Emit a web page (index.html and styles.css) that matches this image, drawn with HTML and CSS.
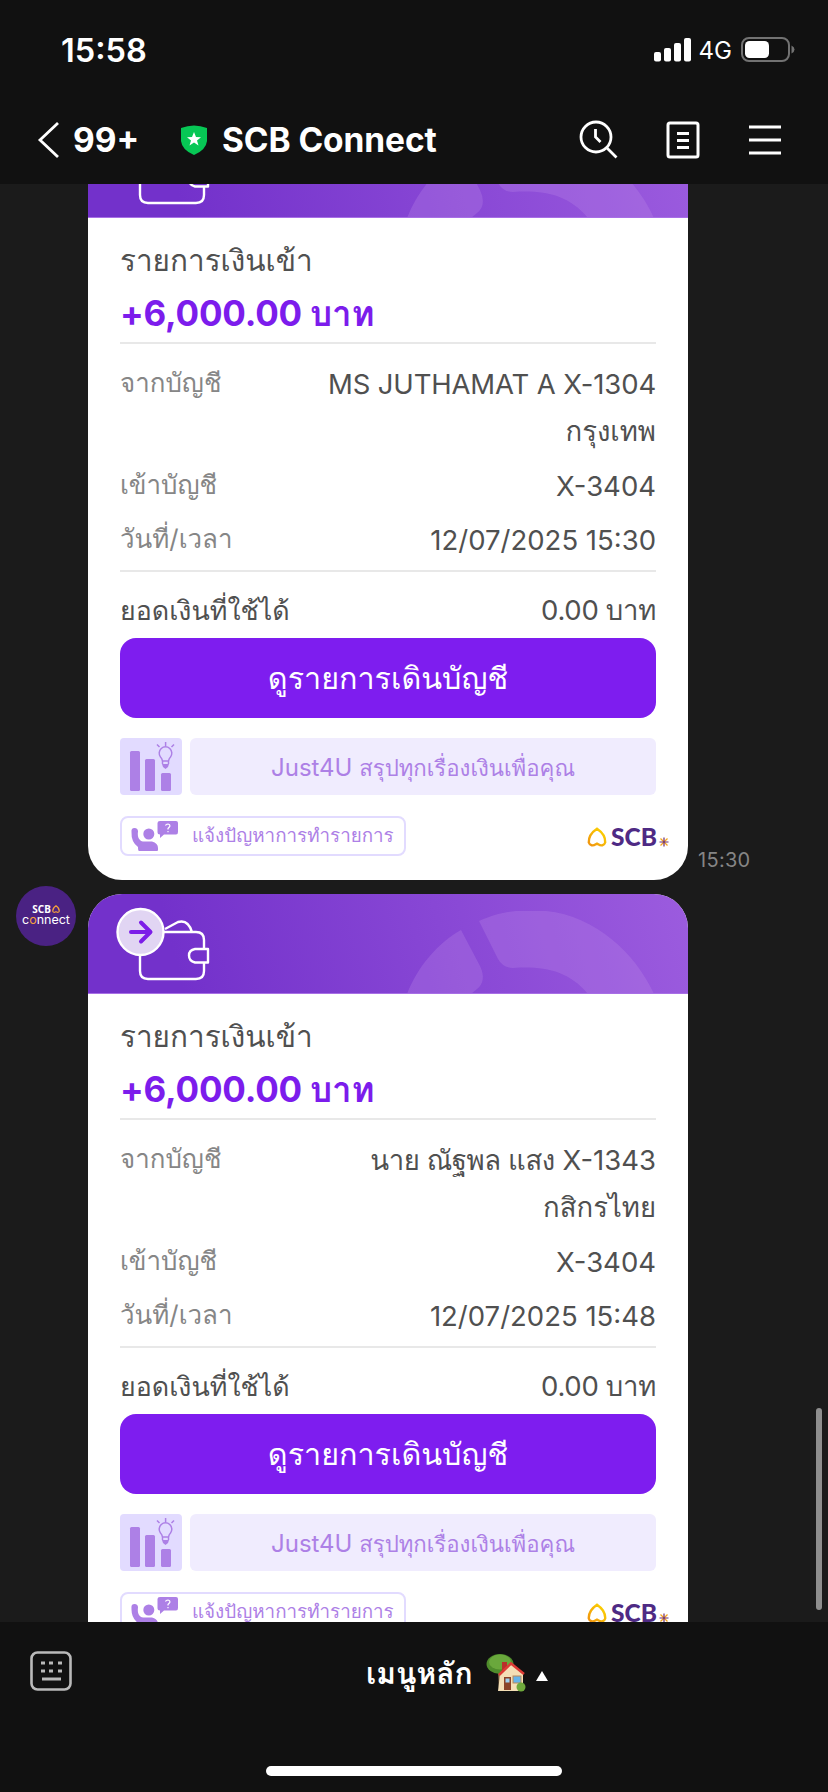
FILE: index.html
```html
<!DOCTYPE html>
<html lang="th">
<head>
<meta charset="utf-8">
<title>SCB Connect</title>
<link rel="stylesheet" href="styles.css">
</head>
<body>
<svg class="defs" width="0" height="0" aria-hidden="true">
  <defs>
    <linearGradient id="banner" x1="0" y1="100" x2="600" y2="-60" gradientUnits="userSpaceOnUse">
      <stop offset="0.15" stop-color="#7331cb"/>
      <stop offset="1" stop-color="#9d5ddf"/>
    </linearGradient>
    <linearGradient id="gold" x1="0" y1="1" x2="1" y2="0">
      <stop offset="0" stop-color="#f0930f"/>
      <stop offset="1" stop-color="#fdd900"/>
    </linearGradient>
    <symbol id="hero" viewBox="0 0 600 100">
      <rect width="600" height="100" fill="url(#banner)"/>
      <g fill="#c08bea" fill-opacity=".28">
        <path d="M319 100C330 72 350 49 373 36L392 72Q399 87 389 95L383 100Z"/>
        <path d="M391 27C406 20 417 18 428 17H458C508 22 548 60 566 100H500C480 76 455 72 425 74Q415 74 410 65Z"/>
      </g>
      <path d="M0 99.500H600" stroke="#a86fe6"/>
      <g fill="none" stroke="#fff" stroke-width="2.400" stroke-linejoin="round">
        <path d="M52 38V77Q52 85 60 85H108Q116 85 116 77V69M116 54V46Q116 38 108 38H75M77 35L90 28Q100 25 104 38"/>
        <path d="M120 55H107Q101 56 101 61.500Q101 67 107 68.500H120Z"/>
        <circle cx="52.500" cy="38" r="23" fill="#e1d5f3"/>
      </g>
      <path d="M43 38H62M53 28.500L62.500 38L53 47.500" fill="none" stroke="#7c1de8" stroke-width="4" stroke-linecap="round" stroke-linejoin="round"/>
    </symbol>
    <symbol id="chart" viewBox="0 0 62 57">
      <g fill="#ad80e6">
        <rect x="10" y="13" width="10" height="40" rx="1.500"/>
        <rect x="25" y="21" width="10" height="32" rx="1.500"/>
        <rect x="41" y="35" width="10" height="18" rx="1.500"/>
        <path d="M42 26H49L48 29L45.500 31L43 29Z"/>
      </g>
      <path d="M42.500 26V23Q42 20.500 40.500 19A6.300 6.300 0 1 1 50.500 19Q49 20.500 48.500 23V26M42.500 23H48.500M45.600 4V8M37 6.500L39.500 9M54 6.500L51.500 9" fill="none" stroke="#ad80e6" stroke-width="1.500"/>
    </symbol>
    <symbol id="help" viewBox="0 0 48 32">
      <g fill="#ad80e6">
        <circle cx="17.800" cy="14" r="5.500"/>
        <path d="M3.500 8Q7 8 7 11.500C6 18 9 21 12 21.500H21Q27 23 27 28V30Q27 31 26 31H8Q7 31 7 27Q0 22 .5 12Q0 8 3.500 8Z"/>
        <path d="M29 1H45Q47 1 47 3V12Q47 14.500 45 14.500H33L29 18V14.500Q26.500 14.500 26.500 12V3Q26.500 1 29 1Z"/>
      </g>
      <path d="M34.500 5.500Q35 4 37 4Q39.300 4.500 38.800 6.500L37 8.500V9.500M37 11V12.200" fill="none" stroke="#fff" stroke-width="1.200"/>
    </symbol>
    <symbol id="leaf" viewBox="0 0 20 20">
      <path d="M8.800 18.300V17.300C6 19 2.800 18.700 1.800 15.500C1.500 9.500 4.500 5.500 10 1.800C15.500 5.500 18.500 9.500 18.200 15.500C17.200 18.700 14 19 11.200 17.300V18.300" fill="none" stroke="url(#gold)" stroke-width="2.400"/>
    </symbol>
    <symbol id="spark" viewBox="0 0 10 10">
      <path d="M1.500 1.500L8.500 8.500M8.500 1.500L1.500 8.500" stroke="#f5a21b" stroke-width="1.300"/>
      <path d="M5 .5V9.500M.5 5H9.500" stroke="#6a2c70" stroke-width="1.200"/>
    </symbol>
  </defs>
</svg>

<div class="screen">
  <header class="top">
    <div class="status">
      <span class="clock">15:58</span>
      <span class="network">
        <svg class="signal" viewBox="0 0 38 24"><g fill="#fff"><rect x="0" y="14" width="7" height="9.500" rx="2"/><rect x="10" y="10" width="7" height="13.500" rx="2"/><rect x="20" y="5" width="7" height="18.500" rx="2"/><rect x="30" y="0" width="7" height="23.500" rx="2"/></g></svg>
        <span class="net-type">4G</span>
        <svg class="battery" viewBox="0 0 54 26"><rect x="1" y="1" width="47" height="23" rx="7" fill="none" stroke="#727272" stroke-width="2"/><rect x="4" y="4" width="24" height="17" rx="4.500" fill="#fff"/><path d="M50.500 8.500Q53.500 10 53.500 12.500Q53.500 15 50.500 16.500Z" fill="#727272"/></svg>
      </span>
    </div>
    <nav class="nav">
      <svg class="back" viewBox="0 0 24 38"><path d="M21 2L3 19L21 36" fill="none" stroke="#fff" stroke-width="2.800"/></svg>
      <span class="unread">99+</span>
      <svg class="shield" viewBox="0 0 28 31"><path d="M1 3Q14-2 27 3V16Q26 25 14 30Q2 25 1 16Z" fill="#07c755"/><path d="M14 7L16 12L21 12.200L17 15.500L18.500 20.500L14 17.500L9.500 20.500L11 15.500L7 12.200L12 12Z" fill="#fff"/></svg>
      <span class="title">SCB Connect</span>
      <span class="actions">
        <svg class="search" viewBox="0 0 40 40"><g fill="none" stroke="#fff" stroke-width="2.800"><circle cx="17" cy="17" r="15"/><path d="M27 27L37.500 37.500M16.500 9V17L21.500 22"/></g></svg>
        <svg class="note" viewBox="0 0 34 38"><rect x="2" y="2" width="30" height="34" rx="2" fill="none" stroke="#fff" stroke-width="3"/><path d="M11 12.500H23M11 19.500H23M11 26.500H23" stroke="#fff" stroke-width="2.800"/></svg>
        <svg class="menu" viewBox="0 0 34 32"><path d="M1 3H33M1 16H33M1 29H33" stroke="#fff" stroke-width="2.800"/></svg>
      </span>
    </nav>
  </header>

  <main class="chat">
    <section class="message first">
      <article class="card">
        <svg class="banner"><use href="#hero"/></svg>
        <div class="body">
          <h2 class="kind">รายการเงินเข้า</h2>
          <p class="amount">+6,000.00 บาท</p>
          <div class="row from"><span class="label">จากบัญชี</span><span class="value"><span class="sender">MS JUTHAMAT A X-1304</span><br>กรุงเทพ</span></div>
          <div class="row to"><span class="label">เข้าบัญชี</span><span class="value">X-3404</span></div>
          <div class="row date"><span class="label">วันที่/เวลา</span><span class="value">12/07/2025 15:30</span></div>
          <div class="row balance"><span class="label">ยอดเงินที่ใช้ได้</span><span class="value">0.00 บาท</span></div>
          <div class="statement">ดูรายการเดินบัญชี</div>
          <div class="promo"><svg class="chart"><use href="#chart"/></svg><span class="promo-text">Just4U <span class="promo-thai">สรุปทุกเรื่องเงินเพื่อคุณ</span></span></div>
          <div class="foot">
            <span class="report"><svg class="help"><use href="#help"/></svg><span class="report-text">แจ้งปัญหาการทำรายการ</span></span>
            <span class="brand"><svg class="leaf"><use href="#leaf"/></svg><b>SCB</b><svg class="spark"><use href="#spark"/></svg></span>
          </div>
        </div>
      </article>
      <time class="time">15:30</time>
    </section>

    <section class="message">
      <div class="avatar"><span class="avatar-top">SCB<svg class="avatar-leaf" viewBox="0 0 20 20"><path d="M8.800 18.300V17.300C6 19 2.800 18.700 1.800 15.500C1.500 9.500 4.500 5.500 10 1.800C15.500 5.500 18.500 9.500 18.200 15.500C17.200 18.700 14 19 11.200 17.300V18.300" fill="none" stroke="#f5a13c" stroke-width="2.800"/></svg></span><span class="avatar-name">c<i>o</i>nnect</span></div>
      <article class="card">
        <svg class="banner"><use href="#hero"/></svg>
        <div class="body">
          <h2 class="kind">รายการเงินเข้า</h2>
          <p class="amount">+6,000.00 บาท</p>
          <div class="row from"><span class="label">จากบัญชี</span><span class="value"><span class="sender-thai">นาย ณัฐพล แสง</span> X-1343<br>กสิกรไทย</span></div>
          <div class="row to"><span class="label">เข้าบัญชี</span><span class="value">X-3404</span></div>
          <div class="row date"><span class="label">วันที่/เวลา</span><span class="value">12/07/2025 15:48</span></div>
          <div class="row balance"><span class="label">ยอดเงินที่ใช้ได้</span><span class="value">0.00 บาท</span></div>
          <div class="statement">ดูรายการเดินบัญชี</div>
          <div class="promo"><svg class="chart"><use href="#chart"/></svg><span class="promo-text">Just4U <span class="promo-thai">สรุปทุกเรื่องเงินเพื่อคุณ</span></span></div>
          <div class="foot">
            <span class="report"><svg class="help"><use href="#help"/></svg><span class="report-text">แจ้งปัญหาการทำรายการ</span></span>
            <span class="brand"><svg class="leaf"><use href="#leaf"/></svg><b>SCB</b><svg class="spark"><use href="#spark"/></svg></span>
          </div>
        </div>
      </article>
    </section>
    <div class="scrollbar"></div>
  </main>

  <footer class="bottom">
    <svg class="keyboard" viewBox="0 0 42 40"><rect x="1.500" y="1.500" width="39" height="37" rx="6" fill="none" stroke="#bababa" stroke-width="2.600"/><path d="M11 12H15M19 12H23M28 12H32M11 20H15M19 20H23M28 20H32M12 28H31" stroke="#bababa" stroke-width="3"/></svg>
    <div class="main-menu">
      <span class="menu-label">เมนูหลัก</span>
      <svg class="house" viewBox="0 0 40 38">
        <path d="M12 17H17V36H13Z" fill="#8a6a46"/>
        <ellipse cx="14" cy="10" rx="13.500" ry="10" fill="#4f8c2c"/><ellipse cx="14" cy="8" rx="11" ry="7.500" fill="#6aa83c"/>
        <path d="M16 8H21V18H16Z" fill="#b9302b"/>
        <path d="M14 20L25 10L37 20V37H12Z" fill="#f4dfb6"/>
        <path d="M13 21L25 9.500L38 20" fill="none" stroke="#dc3b35" stroke-width="2.500"/>
        <rect x="18" y="23" width="7" height="13" fill="#8a4327"/><rect x="19.500" y="24.500" width="4" height="4" fill="#9ed0ee"/>
        <rect x="27" y="22" width="8" height="7" fill="#65b4ea" stroke="#b98a58"/>
        <ellipse cx="35" cy="33" rx="4.500" ry="4.500" fill="#6fa93c"/>
      </svg>
      <svg class="caret" viewBox="0 0 12 10"><path d="M6 0L12 10H0Z" fill="#fff"/></svg>
    </div>
    <div class="home"></div>
  </footer>
</div>
</body>
</html>
```

FILE: styles.css
```css
* { box-sizing: border-box; }
body { margin: 0; background: #111; font-family: Inter, Loma, "Noto Sans Thai Looped", "Noto Sans", sans-serif; }
svg { display: block; flex: none; }
.defs { position: absolute; }
.screen { width: 828px; height: 1792px; display: flex; flex-direction: column; overflow: hidden; color: #fff; }
.top { height: 184px; background: #111; flex: none; }
.status { height: 100px; padding: 0 33px 0 61px; display: flex; align-items: center; justify-content: space-between; }
.clock { font-size: 32.500px; font-weight: 600; }
.network { display: flex; align-items: center; }
.signal { width: 38px; height: 24px; }
.net-type { font-size: 24px; margin: 0 9px 0 7px; }
.battery { width: 54px; height: 26px; }
.nav { height: 84px; padding: 0 46px 4px 37px; display: flex; align-items: center; }
.back { width: 24px; height: 38px; }
.unread { width: 107px; padding-left: 12px; font-size: 33.500px; font-weight: 700; }
.shield { width: 28px; height: 31px; margin-left: 12px; }
.title { font-size: 33.500px; font-weight: 700; margin-left: 14px; letter-spacing: -.1px; }
.actions { margin-left: auto; display: flex; align-items: center; gap: 48px; }
.search { width: 40px; height: 40px; margin-right: -1px; }
.note { width: 34px; height: 38px; }
.menu { width: 34px; height: 32px; }

.chat { height: 1438px; background: #1b1b1b; position: relative; overflow: hidden; flex: none; display: flex; flex-direction: column; gap: 14px; }
.message { display: flex; align-items: flex-start; padding-left: 88px; position: relative; flex: none; }
.first { margin-top: -66px; }
.card { width: 600px; height: 762px; border-radius: 34px; overflow: hidden; background: #fff; color: #505050; }
.banner { width: 600px; height: 100px; }
.body { padding: 20px 32px 0; }
.kind { margin: 0; height: 46px; line-height: 45px; font-size: 29.700px; font-weight: 400; }
.amount { margin: 0; height: 60px; line-height: 59px; font-size: 35px; font-weight: 700; letter-spacing: -.2px; color: #7c1cec; border-bottom: 2px solid #e8e8e8; }
.row { display: flex; justify-content: space-between; line-height: 47px; font-size: 27.500px; white-space: nowrap; }
.row .label { color: #868686; font-size: 25.900px; line-height: 43px; }
.row .value { text-align: right; }
.sender { letter-spacing: -.15px; }
.sender-thai { letter-spacing: -.4px; }
.from { height: 110px; padding-top: 17px; }
.to { height: 54px; padding-top: 9px; }
.date { height: 64px; padding-top: 9px; border-bottom: 2px solid #e8e8e8; }
.row.balance { height: 66px; padding-top: 15px; }
.row.balance .label { color: #505050; font-size: 26.800px; line-height: 47px; }
.balance .value { letter-spacing: -.3px; }
.statement { height: 80px; line-height: 80px; border-radius: 16px; background: #7e1def; color: #fff; text-align: center; font-size: 30.500px; }
.promo { display: flex; gap: 8px; margin-top: 20px; height: 57px; }
.chart { width: 62px; height: 57px; border-radius: 4px; background: #e2dbff; }
.promo-text { flex: 1; border-radius: 6px; background: #f0ecfe; color: #ad80e6; text-align: center; line-height: 59px; height: 57px; font-size: 24px; white-space: nowrap; }
.promo-thai { font-size: 22.200px; }
.foot { display: flex; justify-content: space-between; margin: 21px -13px 0 0; }
.report { width: 286px; height: 40px; border: 2px solid #e2dbff; border-radius: 8px; display: flex; align-items: center; padding-left: 9px; color: #ad80e6; font-size: 18.800px; line-height: 38px; white-space: nowrap; }
.help { width: 48px; height: 32px; margin-right: 13px; }
.brand { display: flex; align-items: center; color: #4e2a84; font: 700 24.500px/36px Lato, sans-serif; padding-top: 2px; }
.leaf { width: 20px; height: 20px; margin-right: 4px; }
.spark { width: 10px; height: 10px; margin: 9px 0 0 2px; }
.time { align-self: flex-end; margin: 0 0 8px 10px; font-size: 20px; color: #858585; letter-spacing: .3px; }
.avatar { position: absolute; left: 16px; top: -8px; width: 60px; height: 60px; border-radius: 50%; background: #4a2283; display: flex; flex-direction: column; align-items: center; justify-content: center; padding-bottom: 3px; color: #fff; }
.avatar-top { display: flex; align-items: center; font: 700 10px/10px "Noto Sans", sans-serif; }
.avatar-leaf { width: 8px; height: 8px; margin-left: 1px; }
.avatar-name { font: 400 12.500px/12px Inter, sans-serif; }
.avatar-name i { font-style: normal; color: #f5a13c; }
.scrollbar { position: absolute; right: 6px; top: 1224px; width: 6px; height: 202px; border-radius: 3px; background: #8e8e8e; }
.bottom { flex: 1; background: #111; position: relative; padding: 29px 0 0 30px; }
.keyboard { width: 42px; height: 40px; }
.main-menu { position: absolute; left: 366px; top: 28px; height: 46px; display: flex; align-items: center; }
.menu-label { font-size: 30px; line-height: 46px; font-weight: 600; white-space: nowrap; }
.house { width: 40px; height: 38px; margin-left: 13px; }
.caret { width: 12px; height: 10px; margin: 6px 0 0 10px; }
.home { position: absolute; left: 266px; bottom: 16px; width: 296px; height: 10px; border-radius: 5px; background: #fff; }
```
